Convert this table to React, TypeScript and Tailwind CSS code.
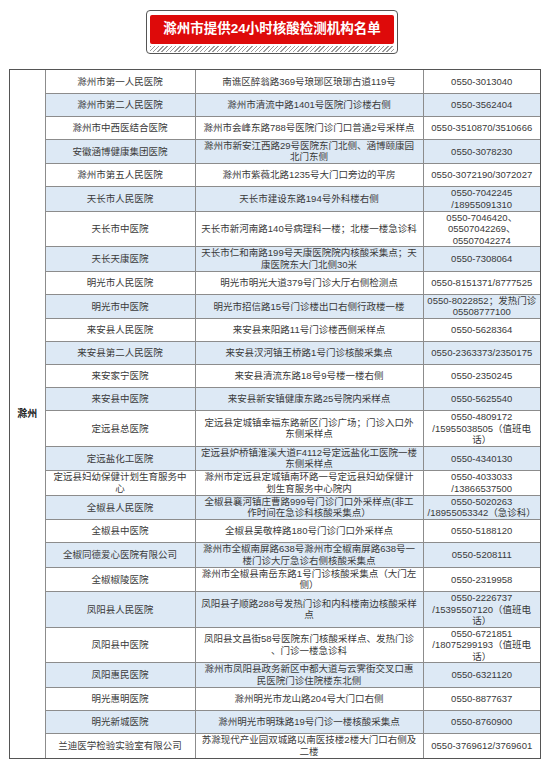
type Row = {
  name: string[]
  addr: string[]
  phone: string[]
}

const rows: Row[] = [
  { name: ['滁州市第一人民医院'], addr: ['南谯区醉翁路369号琅琊区琅琊古道119号'], phone: ['0550-3013040'] },
  { name: ['滁州市第二人民医院'], addr: ['滁州市清流中路1401号医院门诊楼右侧'], phone: ['0550-3562404'] },
  { name: ['滁州市中西医结合医院'], addr: ['滁州市会峰东路788号医院门诊门口普通2号采样点'], phone: ['0550-3510870/3510666'] },
  { name: ['安徽涵博健康集团医院'], addr: ['滁州市新安江西路29号医院东门北侧、涵博颐康园', '北门东侧'], phone: ['0550-3078230'] },
  { name: ['滁州市第五人民医院'], addr: ['滁州市紫薇北路1235号大门口旁边的平房'], phone: ['0550-3072190/3072027'] },
  { name: ['天长市人民医院'], addr: ['天长市建设东路194号外科楼右侧'], phone: ['0550-7042245', '/18955091310'] },
  { name: ['天长市中医院'], addr: ['天长市新河南路140号病理科一楼；北楼一楼急诊科'], phone: ['0550-7046420、', '05507042269、', '05507042274'] },
  { name: ['天长天康医院'], addr: ['天长市仁和南路199号天康医院院内核酸采集点；天', '康医院东大门北侧30米'], phone: ['0550-7308064'] },
  { name: ['明光市人民医院'], addr: ['明光市明光大道379号门诊大厅右侧检测点'], phone: ['0550-8151371/8777525'] },
  { name: ['明光市中医院'], addr: ['明光市招信路15号门诊楼出口右侧行政楼一楼'], phone: ['0550-8022852；发热门诊', '05508777100'] },
  { name: ['来安县人民医院'], addr: ['来安县来阳路11号门诊楼西侧采样点'], phone: ['0550-5628364'] },
  { name: ['来安县第二人民医院'], addr: ['来安县汊河镇王桥路1号门诊核酸采集点'], phone: ['0550-2363373/2350175'] },
  { name: ['来安家宁医院'], addr: ['来安县清流东路18号9号楼一楼右侧'], phone: ['0550-2350245'] },
  { name: ['来安县中医院'], addr: ['来安县新安镇健康东路25号院内采样点'], phone: ['0550-5625540'] },
  { name: ['定远县总医院'], addr: ['定远县定城镇幸福东路新区门诊广场；门诊入口外', '东侧采样点'], phone: ['0550-4809172', '/15955038505（值班电', '话）'] },
  { name: ['定远盐化工医院'], addr: ['定远县炉桥镇淮溪大道F4112号定远盐化工医院一楼', '东侧采样点'], phone: ['0550-4340130'] },
  { name: ['定远县妇幼保健计划生育服务中', '心'], addr: ['滁州市定远县定城镇南环路一号定远县妇幼保健计', '划生育服务中心院内'], phone: ['0550-4033033', '/13866537500'] },
  { name: ['全椒县人民医院'], addr: ['全椒县襄河镇庄曹路999号门诊门口外采样点(非工', '作时间在急诊科核酸采集点）'], phone: ['0550-5020263', '/18955053342（急诊科）'] },
  { name: ['全椒县中医院'], addr: ['全椒县吴敬梓路180号门诊门口外采样点'], phone: ['0550-5188120'] },
  { name: ['全椒同德爱心医院有限公司'], addr: ['滁州市全椒南屏路638号滁州市全椒南屏路638号一', '楼门诊大厅急诊右侧核酸采集点'], phone: ['0550-5208111'] },
  { name: ['全椒椒陵医院'], addr: ['滁州市全椒县南岳东路1号门诊核酸采集点（大门左', '侧）'], phone: ['0550-2319958'] },
  { name: ['凤阳县人民医院'], addr: ['凤阳县子顺路288号发热门诊和内科楼南边核酸采样', '点'], phone: ['0550-2226737', '/15395507120（值班电', '话）'] },
  { name: ['凤阳县中医院'], addr: ['凤阳县文昌街58号医院东门核酸采样点、发热门诊', '、门诊一楼急诊科'], phone: ['0550-6721851', '/18075299193（值班电', '话）'] },
  { name: ['凤阳惠民医院'], addr: ['滁州市凤阳县政务新区中都大道与云霁街交叉口惠', '民医院门诊住院楼东北侧'], phone: ['0550-6321120'] },
  { name: ['明光惠明医院'], addr: ['滁州明光市龙山路204号大门口右侧'], phone: ['0550-8877637'] },
  { name: ['明光新城医院'], addr: ['滁州明光市明珠路19号门诊一楼核酸采集点'], phone: ['0550-8760900'] },
  { name: ['兰迪医学检验实验室有限公司'], addr: ['苏滁现代产业园双城路以南医技楼2楼大门口右侧及', '二楼'], phone: ['0550-3769612/3769601'] },
]

// row height follows the tallest cell
const heightClass: Record<number, string> = {
  1: 'h-[23px]',
  2: 'h-[24.5px]',
  3: 'h-[35px]',
}

function Lines({ lines }: { lines: string[] }) {
  return (
    <>
      {lines.map((l, i) => (
        <div key={i} className="whitespace-nowrap">
          {l}
        </div>
      ))}
    </>
  )
}

export default function App() {
  return (
    <div className="min-h-[760px] w-[550px] bg-white pt-[10px] font-['Liberation_Sans','Noto_Sans_CJK_SC',sans-serif] text-[#3a3a3a]">
      {/* title badge */}
      <div className="ml-[146px] w-[252px] rounded-[4px] border border-[#555] bg-white px-[3px] pt-[4px] pb-0">
        <div className="flex h-[29px] items-center justify-center rounded-[2px] bg-[#de0a0a] text-[13.5px] font-bold text-white">
          滁州市提供24小时核酸检测机构名单
        </div>
        <div className="mt-[2px] mb-[1px] h-[6px] bg-[repeating-linear-gradient(135deg,#9a9a9a_0_1px,#fff_1px_3px)]" />
      </div>

      <div className="mt-[15px] ml-[9px] w-[532px] border border-[#555]">
        <table className="w-[530px] table-fixed border-collapse text-center text-[9.5px] leading-[11.5px]">
          <colgroup>
            <col className="w-[35px]" />
            <col className="w-[150px]" />
            <col className="w-[228px]" />
            <col className="w-[117px]" />
          </colgroup>
          <tbody>
            {rows.map((r, i) => {
              const n = Math.max(r.name.length, r.addr.length, r.phone.length)
              const last = i === rows.length - 1
              const bg = i % 2 === 1 ? 'bg-[#dde9f5]' : 'bg-white'
              const cell = last
                ? 'border-l border-[#8c8c8c] p-0 align-middle'
                : 'border-l border-b border-[#8c8c8c] p-0 align-middle'
              return (
                <tr key={i} className={`${heightClass[n]} ${bg}`}>
                  {i === 0 && (
                    <td rowSpan={rows.length} className="bg-white p-0 align-middle text-[10px] font-bold text-[#222]">
                      滁州
                    </td>
                  )}
                  <td className={cell}>
                    <Lines lines={r.name} />
                  </td>
                  <td className={cell}>
                    <Lines lines={r.addr} />
                  </td>
                  <td className={cell}>
                    <Lines lines={r.phone} />
                  </td>
                </tr>
              )
            })}
          </tbody>
        </table>
      </div>
    </div>
  )
}
